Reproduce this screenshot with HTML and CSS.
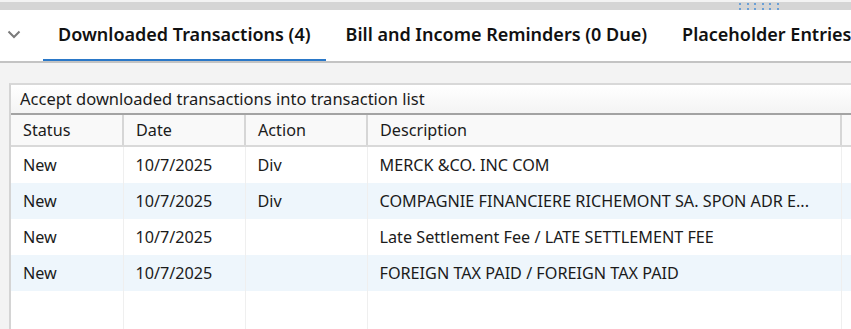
FILE: index.html
```html
<!DOCTYPE html>
<html lang="en">
<head>
  <meta charset="UTF-8" />
  <title>Downloaded Transactions</title>
  <link rel="stylesheet" href="styles.css">
</head>
<body>

  <div class="splitter">
    <div class="grip">
      <span></span><span></span><span></span><span></span><span></span><span></span>
      <span></span><span></span><span></span><span></span><span></span><span></span>
    </div>
  </div>

  <div class="tabbar">
    <div class="collapse">
      <svg width="14" height="9" viewBox="0 0 14 9">
        <polyline points="1.5,1.5 7,7 12.5,1.5" fill="none" stroke="#7a7a7a" stroke-width="2" />
      </svg>
    </div>
    <div class="tab active">Downloaded Transactions (4)</div>
    <div class="tab">Bill and Income Reminders (0 Due)</div>
    <div class="tab">Placeholder Entries</div>
  </div>

  <div class="content">
    <div class="panel">
      <div class="panel-title">Accept downloaded transactions into transaction list</div>
      <table class="grid">
        <thead>
          <tr>
            <th class="col-status">Status</th>
            <th class="col-date">Date</th>
            <th class="col-action">Action</th>
            <th class="col-desc">Description</th>
            <th class="col-rest"></th>
          </tr>
        </thead>
        <tbody>
          <tr>
            <td>New</td><td>10/7/2025</td><td>Div</td><td>MERCK &amp;CO. INC COM</td><td></td>
          </tr>
          <tr>
            <td>New</td><td>10/7/2025</td><td>Div</td><td>COMPAGNIE FINANCIERE RICHEMONT SA. SPON ADR E...</td><td></td>
          </tr>
          <tr>
            <td>New</td><td>10/7/2025</td><td></td><td>Late Settlement Fee / LATE SETTLEMENT FEE</td><td></td>
          </tr>
          <tr>
            <td>New</td><td>10/7/2025</td><td></td><td>FOREIGN TAX PAID / FOREIGN TAX PAID</td><td></td>
          </tr>
          <tr class="empty">
            <td></td><td></td><td></td><td></td><td></td>
          </tr>
        </tbody>
      </table>
    </div>
  </div>

</body>
</html>
```

FILE: styles.css
```css
body {
  margin: 0;
  font-family: "Noto Sans", "Open Sans", sans-serif;
  font-size: 16.2px;
  color: #1b1b1b;
  background: #f3f3f3;
  width: 851px;
  height: 329px;
  overflow: hidden;
}

.splitter {
  height: 8px;
  margin-top: 2px;
  background: #d5d5d5;
  position: relative;
}

.grip {
  position: absolute;
  left: 739px;
  top: 1px;
  display: grid;
  grid-template-columns: repeat(6, 2px);
  column-gap: 5.5px;
  row-gap: 3px;
}

.grip span {
  width: 2px;
  height: 2px;
  background: #6a9fd6;
}

.tabbar {
  display: flex;
  align-items: stretch;
  height: 51px;
  background: #fff;
  border-bottom: 2px solid #c3c3c3;
  white-space: nowrap;
  overflow: hidden;
}

.collapse {
  width: 28px;
  flex-shrink: 0;
  display: flex;
  align-items: center;
  justify-content: center;
  padding-bottom: 2px;
  margin-right: 15px;
}

.tab {
  flex-shrink: 0;
  padding: 0 15px 3px;
  margin-right: 5px;
  display: flex;
  align-items: center;
  position: relative;
  font-size: 18px;
  font-weight: 600;
  color: #111;
}

.tab.active::after {
  content: "";
  position: absolute;
  left: 0;
  right: 0;
  bottom: -1px;
  height: 3px;
  background: #2a78c8;
}

.content {
  padding: 20px 0 0 9px;
}

.panel {
  background: #fff;
  border-left: 2px solid #d4d4d4;
  border-top: 2px solid #d8d8d8;
  height: 260px;
}

.panel-title {
  height: 28px;
  line-height: 28px;
  padding-left: 9px;
  font-size: 16.5px;
  background: linear-gradient(#ffffff, #f4f4f4);
  border-bottom: 2px solid #a3a3a3;
  white-space: nowrap;
}

.grid {
  border-collapse: collapse;
  table-layout: fixed;
  width: 900px;
}

.grid th {
  height: 30px;
  font-weight: normal;
  text-align: left;
  padding: 0 12px;
  background: #f9f9f9;
  border-right: 2px solid #d6d6d6;
  border-bottom: 2px solid #d9d9d9;
}

.grid td {
  height: 36px;
  padding: 0 12px;
  border-right: 1px solid #efefef;
  white-space: nowrap;
  overflow: hidden;
}

.grid tbody tr:nth-child(even) td {
  background: #eef6fc;
}

.grid tbody tr.empty td {
  height: 40px;
  background: #fff;
}

.col-status { width: 87px; }
.col-date { width: 96px; }
.col-action { width: 96px; }
.col-desc { width: 448px; }
```
